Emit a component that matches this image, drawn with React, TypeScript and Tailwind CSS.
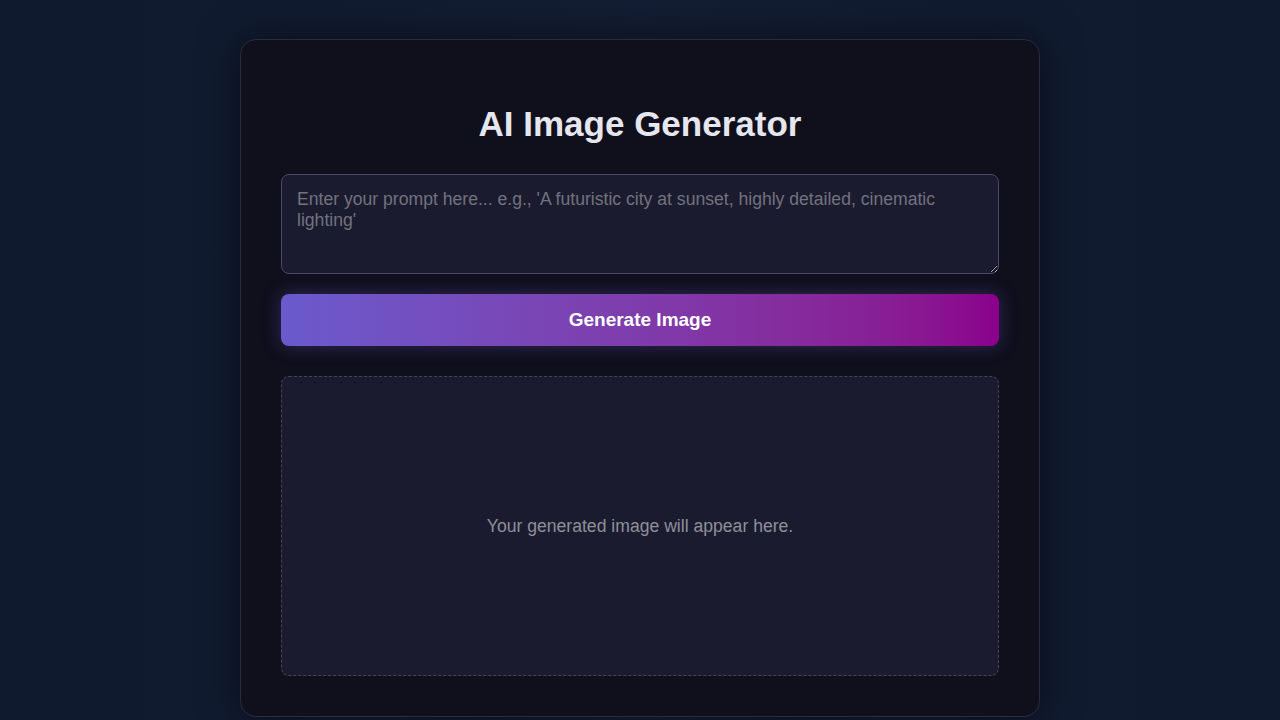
export default function App() {
  return (
    <div className="min-h-screen w-full bg-[#111a2e] bg-gradient-to-r from-[#0f1a2e] via-[#131d33] to-[#0f1a2e] flex justify-center pt-[39px] pb-[4px]" style={{ fontFamily: '"Liberation Sans", Arial, sans-serif' }}>
      <div className="w-[800px] h-[678px] rounded-[16px] border border-[#2a2a40] bg-[#100f1c] shadow-[0_0_40px_rgba(0,0,0,0.5)] px-[40px] pt-[64px] flex flex-col">
        <h1 className="text-center text-[35px] leading-[40px] font-bold text-[#e6e6ee]">AI Image Generator</h1>
        <textarea
          className="mt-[30px] h-[100px] w-full rounded-[8px] border border-[#4a4672] bg-[#1b1b2f] px-[15px] py-[14px] text-[17.6px] leading-[21px] text-[#ddd] placeholder:text-[#72727e] outline-none"
          placeholder="Enter your prompt here... e.g., 'A futuristic city at sunset, highly detailed, cinematic lighting'"
        />
        <button className="mt-[20px] h-[52px] w-full rounded-[8px] bg-gradient-to-r from-[#6a5acd] to-[#8b008b] text-white text-[19px] font-bold shadow-[0_0_18px_rgba(106,90,205,0.35)]">
          Generate Image
        </button>
        <div className="mt-[30px] h-[300px] w-full rounded-[8px] border border-dashed border-[#44425e] bg-[#1b1b2f] flex items-center justify-center">
          <span className="text-[17.6px] text-[#8f8f9a]">Your generated image will appear here.</span>
        </div>
      </div>
    </div>
  );
}
